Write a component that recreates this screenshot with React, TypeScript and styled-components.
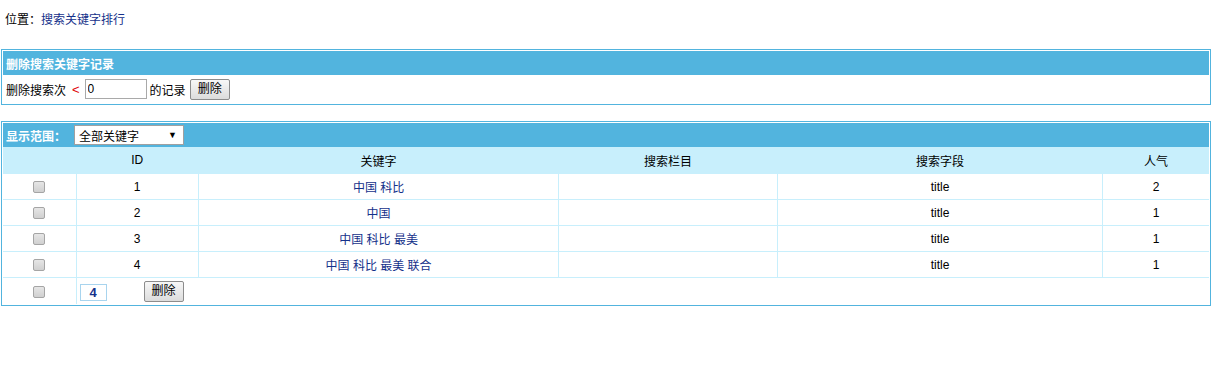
import React from "react";
import styled, { createGlobalStyle } from "styled-components";

const Global = createGlobalStyle`
  html, body { margin: 0; padding: 0; background: #fff; }
  body {
    font-family: "Liberation Sans", "Noto Sans CJK SC", sans-serif;
    font-size: 12px;
    color: #000;
  }
`;

const Page = styled.div`
  width: 1216px;
`;

const Position = styled.div`
  padding: 12px 0 0 5px;
  height: 16px;
  line-height: 16px;
`;

const Link = styled.span`
  color: #15318a;
`;

const Box = styled.div<{ $top: number }>`
  margin: ${(p) => p.$top}px 0 0 1px;
  width: 1210px;
  box-sizing: border-box;
  border: 1px solid #52b4de;
  padding: 1px;
  background: #fff;
`;

const BoxHeader = styled.div`
  height: 24px;
  background: #52b4de;
  color: #fff;
  font-weight: bold;
  display: flex;
  align-items: center;
  padding-left: 3px;
  gap: 2px;
`;

const FormRow = styled.div`
  height: 28px;
  display: flex;
  align-items: center;
  padding-left: 3px;
`;

const Red = styled.span`
  color: #e00000;
  margin: 0 5px 0 6px;
  font-size: 13px;
`;

const TextInput = styled.input`
  box-sizing: border-box;
  width: 62px;
  height: 20px;
  border: 1px solid #a9a9a9;
  padding: 0 2px;
  font: inherit;
  font-size: 12px;
  margin: 0 3px 0 0;
  outline: none;
`;

const Button = styled.button`
  box-sizing: border-box;
  height: 21px;
  padding: 0 7px;
  border: 1px solid #8c8c8c;
  border-radius: 2px;
  background: linear-gradient(#f7f7f7, #dcdcdc);
  font: inherit;
  font-size: 12px;
  color: #000;
  line-height: 19px;
  margin-left: 4px;
`;

const SelectBox = styled.div`
  box-sizing: border-box;
  width: 110px;
  height: 20px;
  margin-left: 6px;
  background: #fff;
  border: 1px solid #a0a0a0;
  color: #000;
  font-weight: normal;
  display: flex;
  align-items: center;
  justify-content: space-between;
  padding: 0 6px 0 4px;
`;

const Arrow = styled.span`
  font-size: 9px;
`;

const Table = styled.table`
  width: 100%;
  border-collapse: collapse;
  table-layout: fixed;
`;

const HeadCell = styled.th<{ $w: number }>`
  width: ${(p) => p.$w}px;
  height: 26px;
  background: #c8effc;
  border-bottom: 1px solid #c8effc;
  font-weight: normal;
  text-align: center;
  padding: 0;
`;

const Cell = styled.td<{ $last?: boolean }>`
  height: 25px;
  padding: 0;
  text-align: center;
  border-bottom: 1px solid #c8effc;
  border-right: ${(p) => (p.$last ? "none" : "1px solid #c8effc")};
`;

const FootCell = styled.td<{ $first?: boolean }>`
  height: 26px;
  padding: 0;
  text-align: ${(p) => (p.$first ? "center" : "left")};
  border-right: ${(p) => (p.$first ? "1px solid #c8effc" : "none")};
`;

const Check = styled.input`
  appearance: none;
  -webkit-appearance: none;
  width: 12px;
  height: 12px;
  margin: 0;
  vertical-align: middle;
  border: 1px solid #a5a5a5;
  border-radius: 2px;
  background: linear-gradient(#e6e6e6, #d0d0d0);
`;

const FootInner = styled.div`
  display: flex;
  align-items: center;
  padding-left: 3px;
`;

const PageNum = styled.span`
  box-sizing: border-box;
  width: 27px;
  height: 17px;
  border: 1px solid #a8d4ee;
  color: #15318a;
  font-weight: bold;
  font-size: 13px;
  display: flex;
  align-items: center;
  justify-content: center;
  margin-top: 3px;
  margin-right: 33px;
`;

const rows = [
  { id: 1, kw: "中国 科比", field: "title", pop: 2 },
  { id: 2, kw: "中国", field: "title", pop: 1 },
  { id: 3, kw: "中国 科比 最美", field: "title", pop: 1 },
  { id: 4, kw: "中国 科比 最美 联合", field: "title", pop: 1 },
];

const widths = [73, 122, 360, 218, 325, 106];
const heads = ["", "ID", "关键字", "搜索栏目", "搜索字段", "人气"];

export default function App() {
  return (
    <Page>
      <Global />
      <Position>
        位置：<Link>搜索关键字排行</Link>
      </Position>

      <Box $top={21}>
        <BoxHeader>删除搜索关键字记录</BoxHeader>
        <FormRow>
          删除搜索次<Red>&lt;</Red>
          <TextInput defaultValue="0" />
          的记录
          <Button>删除</Button>
        </FormRow>
      </Box>

      <Box $top={16}>
        <BoxHeader>
          显示范围：
          <SelectBox>
            全部关键字<Arrow>▼</Arrow>
          </SelectBox>
        </BoxHeader>
        <Table>
          <thead>
            <tr>
              {heads.map((h, i) => (
                <HeadCell key={i} $w={widths[i]}>
                  {h}
                </HeadCell>
              ))}
            </tr>
          </thead>
          <tbody>
            {rows.map((r) => (
              <tr key={r.id}>
                <Cell>
                  <Check type="checkbox" />
                </Cell>
                <Cell>{r.id}</Cell>
                <Cell>
                  <Link>{r.kw}</Link>
                </Cell>
                <Cell></Cell>
                <Cell>{r.field}</Cell>
                <Cell $last>{r.pop}</Cell>
              </tr>
            ))}
            <tr>
              <FootCell $first>
                <Check type="checkbox" />
              </FootCell>
              <FootCell colSpan={5}>
                <FootInner>
                  <PageNum>4</PageNum>
                  <Button>删除</Button>
                </FootInner>
              </FootCell>
            </tr>
          </tbody>
        </Table>
      </Box>
    </Page>
  );
}
